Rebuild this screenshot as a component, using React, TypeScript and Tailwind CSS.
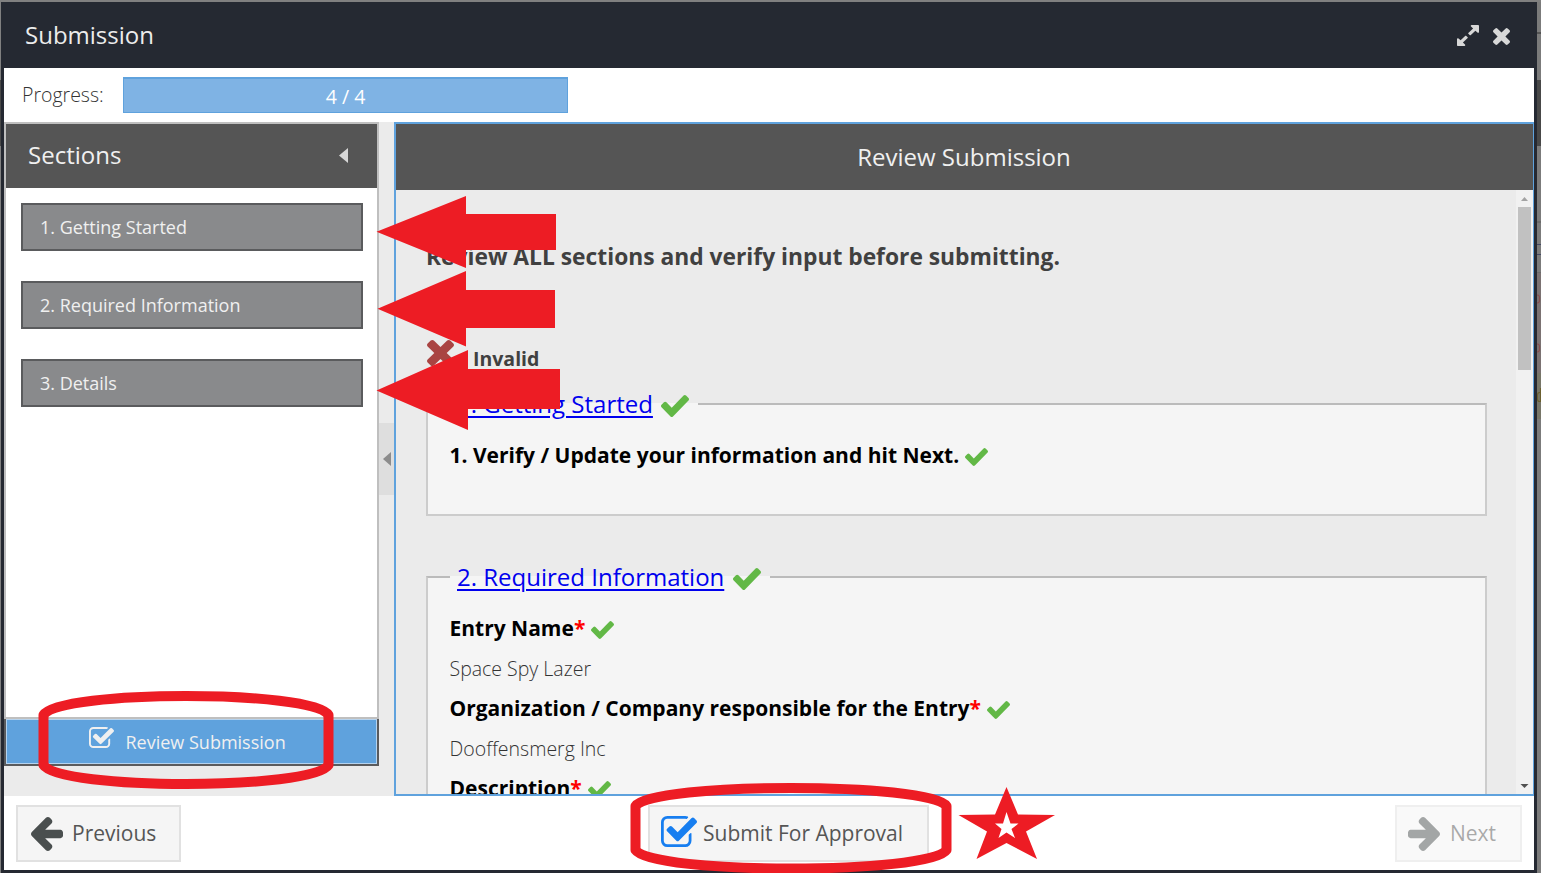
import React from "react";

const CHECK = "M1671 566q0 40-28 68l-724 724-136 136q-28 28-68 28t-68-28l-136-136-362-362q-28-28-28-68t28-68l136-136q28-28 68-28t68 28l294 295 656-657q28-28 68-28t68 28l136 136q28 28 28 68z";
const TIMES = "M1490 1322q0 40-28 68l-136 136q-28 28-68 28t-68-28l-294-294-294 294q-28 28-68 28t-68-28l-136-136q-28-28-28-68t28-68l294-294-294-294q-28-28-28-68t28-68l136-136q28-28 68-28t68 28l294 294 294-294q28-28 68-28t68 28l136 136q28 28 28 68t-28 68l-294 294 294 294q28 28 28 68z";
const EXPAND = "M883 1056q0 13-10 23l-332 332 144 144q19 19 19 45t-19 45-45 19h-448q-26 0-45-19t-19-45v-448q0-26 19-45t45-19 45 19l144 144 332-332q10-10 23-10t23 10l114 114q10 10 10 23zm781-864v448q0 26-19 45t-45 19-45-19l-144-144-332 332q-10 10-23 10t-23-10l-114-114q-10-10-10-23t10-23l332-332-144-144q-19-19-19-45t19-45 45-19h448q26 0 45 19t19 45z";
const ARROW = "M1664 896v128q0 53-32.5 90.5t-84.5 37.5h-704l293 294q38 36 38 90t-38 90l-75 76q-37 37-90 37-52 0-91-37l-651-652q-37-37-37-90 0-52 37-91l651-650q38-38 91-38 52 0 90 38l75 74q38 38 38 91t-38 91l-293 293h704q52 0 84.5 37.5t32.5 90.5z";
const CHECK_SQUARE = "M1472 930v318q0 119-84.5 203.5t-203.5 84.5h-832q-119 0-203.5-84.5t-84.5-203.5v-832q0-119 84.5-203.5t203.5-84.5h832q63 0 117 25 15 7 18 23 3 17-9 29l-49 49q-10 10-23 10-3 0-9-2-23-6-45-6h-832q-66 0-113 47t-47 113v832q0 66 47 113t113 47h832q66 0 113-47t47-113v-254q0-13 9-22l64-64q10-10 23-10 6 0 12 3 20 8 20 29zm231-489l-814 814q-24 24-57 24t-57-24l-430-430q-24-24-24-57t24-57l110-110q24-24 57-24t57 24l263 263 647-647q24-24 57-24t57 24l110 110q24 24 24 57t-24 57z";

function Glyph({ d, box, className }: { d: string; box: string; className: string }) {
  return (
    <svg viewBox={box} preserveAspectRatio="none" fill="currentColor" className={"shrink-0 " + className}>
      <path d={d} />
    </svg>
  );
}

const Check = ({ className }: { className: string }) => (
  <Glyph d={CHECK} box="121 334 1550 1188" className={"text-[#62b846] " + className} />
);

function SectionButton({ label }: { label: string }) {
  return (
    <button className="flex h-12 w-[342px] items-center border-2 border-[#5a5b5d] bg-[#898a8c] pl-[17px] text-left text-[18px] text-[#f0f0f0]">
      {label}
    </button>
  );
}

function Legend({ label }: { label: string }) {
  return (
    <legend className="h-9 pr-[9px] pl-[7.500px]">
      <span className="flex h-9 items-center">
        <a className="text-[24px] leading-9 text-[#0000ee] underline decoration-2 underline-offset-[3px]">{label}</a>
        <Check className="mt-1 ml-[8.500px] h-[22px] w-7" />
      </span>
    </legend>
  );
}

function Field({ label, required }: { label: string; required?: boolean }) {
  return (
    <div className="flex h-10 items-center text-[21px] font-bold whitespace-nowrap text-black">
      <span className="pt-0.5">
        {label}
        {required && <span className="text-[#ff0000]">*</span>}
      </span>
      <Check className="mt-[3px] ml-[6px] h-[18px] w-[23px]" />
    </div>
  );
}

const Value = ({ children }: { children: React.ReactNode }) => (
  <div className="flex h-10 items-center pt-px text-[19.5px] font-light text-[#333]">{children}</div>
);

function Annotations() {
  return (
    <svg width="1541" height="873" className="pointer-events-none absolute top-0 left-0" fill="#ed1c24">
      <path d="M376.5 231.7L466 196V214H556V250H466V268Z" />
      <path d="M377.5 308.7L466 271V290H555V328H466V346.5Z" />
      <path d="M376.5 390.5L468 350V369H560V409H468V430Z" />
      <path fill="none" stroke="#ed1c24" strokeWidth="10" strokeLinejoin="round" d="M43.5 715C60 689.700 312 689.700 328.500 715V765C312 790.300 60 790.300 43.500 765Z" />
      <path fill="none" stroke="#ed1c24" strokeWidth="10" strokeLinejoin="round" d="M635.500 806C652 782 930 782 946.500 806V850C930 874.700 652 874.700 635.500 850Z" />
      <path fillRule="evenodd" d="M1006.500 787L1018 814.500L1055 815L1026 831.500L1037 859L1006.500 843L976.500 859L987 831.500L958.500 815L995 814.500ZM1006.500 812L1003 823.500H995L1001.500 829L998.500 838L1006.500 832.500L1015 838L1011.500 829L1018.500 823.500H1010.500Z" />
    </svg>
  );
}

export default function App() {
  return (
    <div className="relative flex h-[873px] w-[1541px] overflow-hidden bg-[#808080] pt-[2px] font-['Open_Sans',sans-serif]">
      <div className="w-px shrink-0 pt-[78px]">
        <div className="h-[66px] bg-[#484848]" />
      </div>
      <div className="flex h-[871px] w-[1536px] shrink-0 flex-col bg-[#252932] px-[3px] pb-[3px]">
        <header className="flex h-[66px] shrink-0 items-center pr-[24.500px] pl-[21px] text-[#ececec]">
          <h1 className="grow text-[24px]">Submission</h1>
          <Glyph d={EXPAND} box="128 128 1536 1536" className="mr-[13.500px] h-[21px] w-[22px] text-[#d8d8d8]" />
          <Glyph d={TIMES} box="302 366 1188 1188" className="mt-0.5 h-[17px] w-[17px] text-[#d8d8d8]" />
        </header>

        <div className="flex h-[54px] shrink-0 items-center bg-white">
          <span className="w-[119px] pl-[18px] text-[19.5px] font-light text-[#333]">Progress:</span>
          <div className="flex h-9 w-[445px] items-center justify-center border border-t-2 border-[#5fa2dd] bg-[#7fb3e4] pt-0.5 text-[19.5px] font-medium text-white">4 / 4</div>
        </div>

        <div className="flex h-[674px] shrink-0 bg-[#ebebeb]">
          <aside className="w-[375px] shrink-0">
            <div className="h-[597px] border-2 border-[#bfbfbf] bg-white">
              <div className="flex h-16 items-center justify-between bg-[#555] pr-[29px] pb-0.5 pl-[22px] text-[24px] text-[#f0f0f0]">
                Sections
                <svg width="9" height="15" fill="#d8d8d8"><path d="M9 0V15L0 7.500Z" /></svg>
              </div>
              <nav className="flex flex-col gap-[30px] pt-[15px] pl-[15px]">
                <SectionButton label="1. Getting Started" />
                <SectionButton label="2. Required Information" />
                <SectionButton label="3. Details" />
              </nav>
            </div>
            <button className="flex h-[47px] w-[375px] border-r-2 border-b-2 border-l-2 border-[#5a5b5d] text-[18px] text-[#f0f0f0]">
              <span className="flex h-[45px] w-[371px] items-center border border-[#b5d3ef] bg-[#5fa2dd] pl-[82px]">
                <Glyph d={CHECK_SQUARE} box="64 128 1663 1408" className="mb-2 h-[21px] w-[25px]" />
                <span className="ml-[11.500px] pt-0.5">Review Submission</span>
              </span>
            </button>
          </aside>
          <div className="w-[15px] shrink-0 pt-[301px]">
            <div className="flex h-[72px] items-center justify-center bg-[#dedede]">
              <svg width="8" height="14" fill="#8c8c8c"><path d="M8 0V14L0 7Z" /></svg>
            </div>
          </div>

          <main className="flex w-[1140px] shrink-0 flex-col border-2 border-r border-[#5fa2dd]">
            <h2 className="flex h-[66px] shrink-0 items-center justify-center bg-[#555] pr-px text-[24px] text-[#f0f0f0]">Review Submission</h2>
            <div className="flex h-[604px] overflow-hidden">
              <div className="h-[604px] w-[1120px] shrink-0 overflow-hidden pl-[30px]">
                <p className="mt-[49px] h-9 text-[22.8px] leading-9 font-bold text-[#404040]">Review ALL sections and verify input before submitting.</p>
                <div className="mt-[65px] flex h-[46px] items-start pl-px">
                  <Glyph d={TIMES} box="302 366 1188 1188" className="h-[26px] w-[27px] text-[#a94442]" />
                  <span className="ml-[19px] pt-1 text-[19.5px] leading-[30px] font-bold text-[#404040]">Invalid</span>
                </div>
                <fieldset className="h-[130px] w-[1061px] border-2 border-t-[#bbb] border-r-[#ccc] border-b-[#ccc] border-l-[#ccc] bg-[#f5f5f5] pl-[21.500px]">
                  <Legend label="1. Getting Started" />
                  <div className="pt-[13px]">
                    <Field label="1. Verify / Update your information and hit Next." />
                  </div>
                </fieldset>
                <fieldset className="mt-[43px] h-[400px] w-[1061px] border-2 border-t-[#bbb] border-r-[#ccc] border-b-[#ccc] border-l-[#ccc] bg-[#f5f5f5] pl-[21.500px]">
                  <Legend label="2. Required Information" />
                  <div className="pt-[13px]">
                    <Field label="Entry Name" required />
                    <Value>Space Spy Lazer</Value>
                    <Field label="Organization / Company responsible for the Entry" required />
                    <Value>Dooffensmerg Inc</Value>
                    <Field label="Description" required />
                  </div>
                </fieldset>
              </div>
              <div className="flex h-[604px] w-[17px] shrink-0 flex-col items-center bg-[#f1f1f1]">
                <svg width="17" height="17" className="shrink-0" fill="#a3a3a3"><path d="M8.500 7L12 11H5Z" /></svg>
                <div className="h-[163px] w-[13px] bg-[#c1c1c1]" />
                <div className="grow" />
                <svg width="17" height="17" className="shrink-0" fill="#505050"><path d="M8.500 11L12.500 7H4.500Z" /></svg>
              </div>
            </div>
          </main>
        </div>

        <footer className="flex h-[74px] shrink-0 items-start bg-white pt-[9px] pl-3 text-[21px] text-[#555]">
          <button className="flex h-[57px] w-[165px] items-center border-2 border-[#e1e1e1] bg-[#f5f5f5] pl-[12.500px]">
            <Glyph d={ARROW} box="192 181 1472 1558" className="h-[34px] w-8 text-[#4a4f4f]" />
            <span className="ml-[9.500px] pt-px">Previous</span>
          </button>
          <button className="ml-[467px] flex h-[57px] w-[281px] items-center border-2 border-[#e1e1e1] bg-[#f5f5f5] pl-[11px] whitespace-nowrap">
            <Glyph d={CHECK_SQUARE} box="64 128 1663 1408" className="mb-1 h-[31px] w-9 text-[#177ef0]" />
            <span className="ml-[6px] pt-px">Submit For Approval</span>
          </button>
          <button className="ml-[466px] flex h-[57px] w-[127px] items-center border-2 border-[#e1e1e1] bg-[#f5f5f5] pl-[11px] opacity-50">
            <Glyph d={ARROW} box="192 181 1472 1558" className="h-[34px] w-8 rotate-180 text-[#4a4f4f]" />
            <span className="ml-[10px] pt-px">Next</span>
          </button>
        </footer>
      </div>
      <div className="flex w-1 shrink-0 flex-col bg-[#7b7b7b]">
        <div className="h-8 border-b-2 border-[#555]" />
        <div className="h-[46px]" />
        <div className="h-[66px] bg-[#484848]" />
        <div className="h-[77px] border-b-2 border-[#6c6c6c]" />
        <div className="h-[22px] border-b border-[#444a66]" />
        <div className="h-[10px] border-b border-[#444a66]" />
        <div className="h-[18px] border-b border-[#6c6c6c]" />
        <div className="h-[100px] bg-[#7b7272]" />
        <div className="h-[46px] bg-[#777668]" />
      </div>
      <svg width="4" height="120" className="absolute top-[290px] left-[1537px]" fill="none" strokeWidth="1.200">
        <path stroke="#8a4f4f" d="M0 5Q3 5 2.500 9Q3 13 0 13M0 54Q3 54 2.500 58Q3 62 0 62" />
        <path stroke="#6b6030" d="M3.500 98V112M4 103Q0 101 0.500 107Q0 113 4 111" />
      </svg>
      <Annotations />
    </div>
  );
}
